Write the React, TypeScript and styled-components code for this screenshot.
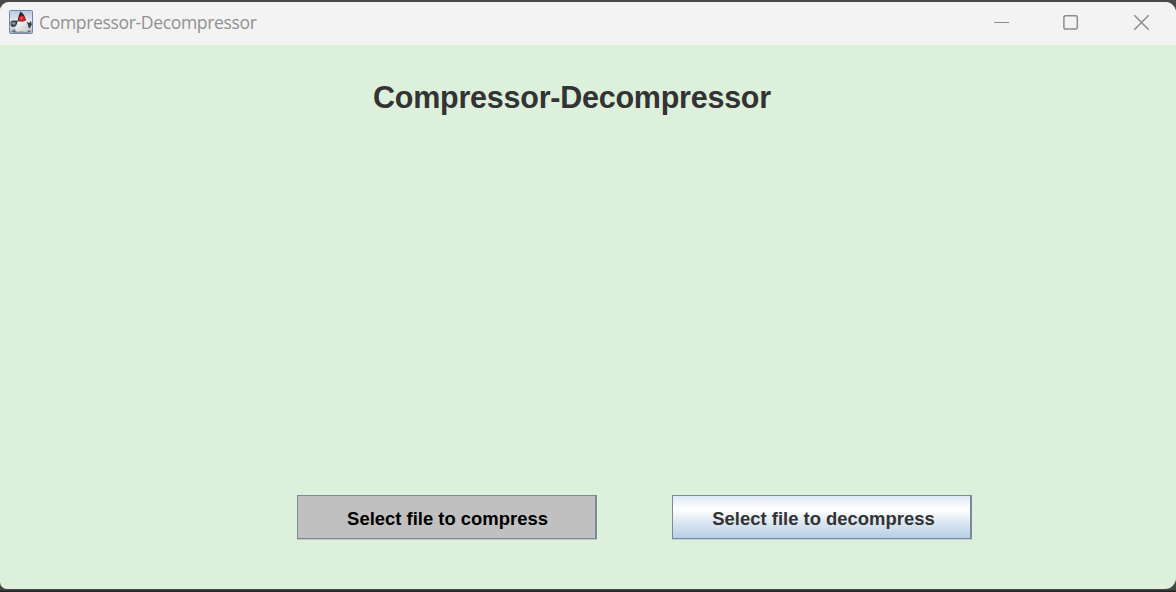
import React from "react";
import styled, { createGlobalStyle } from "styled-components";

const GlobalStyle = createGlobalStyle`
  html, body { margin: 0; padding: 0; }
  body { background: #4a4a4a; overflow: hidden; }
`;

const Desktop = styled.div`
  box-sizing: border-box;
  width: 1176px;
  height: 592px;
  padding: 2px 0 3px;
  background: linear-gradient(#4a4848 0 571px, #434643 589px, #434543 590px, #2a2027 591px);
`;

const Frame = styled.div`
  display: flex;
  flex-direction: column;
  height: 587px;
  border-radius: 9px 11px 11px 7px;
  overflow: hidden;
  background: #ddf0dc;
`;

const TitleBar = styled.header`
  display: flex;
  align-items: center;
  flex: none;
  box-sizing: border-box;
  height: 43px;
  padding: 0 26px 2px 9px;
  background: #f3f3f3;
`;

const AppIcon = styled.svg`
  flex: none;
  width: 24px;
  height: 24px;
  margin-bottom: 1px;
`;

const Caption = styled.span`
  margin-left: 6px;
  padding-bottom: 2px;
  flex: 1;
  font: 400 17.6px/24px "Open Sans", sans-serif;
  letter-spacing: -0.38px;
  white-space: nowrap;
  color: #919191;
`;

const Controls = styled.div`
  display: flex;
  align-items: center;
  gap: 54px;
  height: 17px;
`;

const Content = styled.main`
  flex: 1;
  display: flex;
  flex-direction: column;
  justify-content: space-between;
`;

const Heading = styled.h1`
  margin: 34px 0 0 373px;
  font: bold 30.5px/36px "Liberation Sans", Arial, sans-serif;
  letter-spacing: -0.24px;
  white-space: nowrap;
  color: #333;
`;

const Actions = styled.div`
  display: flex;
  gap: 75px;
  padding: 0 0 50px 297px;
`;

const ActionButton = styled.button<{ $flat?: boolean }>`
  box-sizing: border-box;
  width: 300px;
  height: 44px;
  margin: 0;
  padding: 4px 0 0 ${(p) => (p.$flat ? 2 : 4)}px;
  border: solid #7a8a99;
  border-width: 1px 2px 1px 1px;
  border-radius: 0;
  background: ${(p) =>
    p.$flat ? "#c0c0c0" : "linear-gradient(#dde8f3 0%, #ffffff 30%, #ffffff 33%, #dce7f1 62%, #b8cfe5 100%)"};
  box-shadow: 0 1px 0 ${(p) => (p.$flat ? "#c0c5c4" : "#b8cfe5")};
  color: ${(p) => (p.$flat ? "#000" : "#333")};
  font: bold 18.45px/22px "Liberation Sans", Arial, sans-serif;
  white-space: nowrap;
`;

const JavaIcon = () => (
  <AppIcon viewBox="0 0 24 24">
    <defs>
      <linearGradient id="tile" x1="0" y1="0" x2="0" y2="1">
        <stop offset="0" stopColor="#b9c9df" />
        <stop offset=".5" stopColor="#e6ebf1" />
        <stop offset="1" stopColor="#b3b8bf" />
      </linearGradient>
      <linearGradient id="belly" x1="0" y1="0" x2="1" y2="1">
        <stop offset="0" stopColor="#fff" />
        <stop offset="1" stopColor="#c8c8c8" />
      </linearGradient>
    </defs>
    <rect x=".5" y=".5" width="23" height="23" rx="1" fill="url(#tile)" stroke="#6d87ad" />
    <path d="M1.500 11.500L4 10.500h6v4l-4 2-3 .5-1.500-2z" fill="#39424a" />
    <path d="M2.500 12.300h4v2.200h-4z" fill="#6f9cc2" />
    <path d="M17.500 11.500l2.500 1.500 2-2 .8 3.500-1.800 3.500-3-.5z" fill="#343d43" />
    <path d="M2 21.500l5-3L18 19l4 2.500-2 1H5z" fill="#6d7073" />
    <path d="M9 10c-.3 4-4 8-2.500 11 1 1.600 3.500.2 6 .4 2.500.200 5 1.200 6.800-.4 1-3-.2-7-2.300-10z" fill="url(#belly)" />
    <path d="M11.500 1.500C14 3 16.300 6 17 10.500l-3 .8L9 11.200c-.2-3.500 1-6.700 2.500-9.700z" fill="#292a2c" />
    <circle cx="13" cy="8.700" r="3" fill="#df1f23" />
    <circle cx="12.400" cy="7.900" r="1" fill="#f46660" />
  </AppIcon>
);

const MinimizeIcon = () => (
  <svg width="16" height="17" viewBox="0 0 16 17">
    <path d="M1 8.500h15" stroke="#8c8c8c" />
  </svg>
);

const MaximizeIcon = () => (
  <svg width="16" height="17" viewBox="0 0 16 17">
    <rect x=".9" y="1.700" width="13.400" height="13.400" rx="1.500" fill="none" stroke="#8c8c8c" strokeWidth="1.500" />
  </svg>
);

const CloseIcon = () => (
  <svg width="17" height="17" viewBox="0 0 17 17">
    <path d="M1.300 1.300l14.400 14.400M15.700 1.300L1.300 15.700" stroke="#8c8c8c" strokeWidth="1.500" />
  </svg>
);

export default function App() {
  return (
    <Desktop>
      <GlobalStyle />
      <Frame>
        <TitleBar>
          <JavaIcon />
          <Caption>Compressor-Decompressor</Caption>
          <Controls>
            <MinimizeIcon />
            <MaximizeIcon />
            <CloseIcon />
          </Controls>
        </TitleBar>
        <Content>
          <Heading>Compressor-Decompressor</Heading>
          <Actions>
            <ActionButton $flat>Select file to compress</ActionButton>
            <ActionButton>Select file to decompress</ActionButton>
          </Actions>
        </Content>
      </Frame>
    </Desktop>
  );
}
